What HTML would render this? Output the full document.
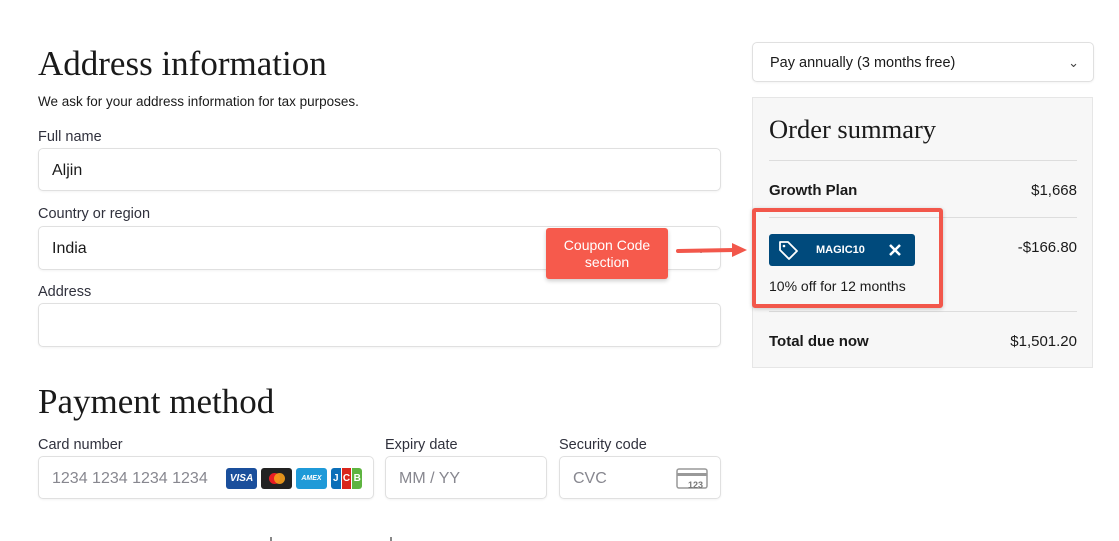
<!DOCTYPE html><html><head><style>
body{margin:0;width:1119px;height:541px;background:#fff;font-family:"Liberation Sans",sans-serif;color:#1a1a1a;position:relative;overflow:hidden}
.a{position:absolute}
.h{font-family:"Liberation Serif",serif;font-size:35px;color:#1a1a1a}
.lbl{font-size:14.5px;color:#30313d}
.in{position:absolute;border:1px solid #e0e0e0;border-radius:5px;box-shadow:0 1px 2px rgba(0,0,0,.05);box-sizing:border-box;font-size:16px;padding-left:13px;padding-top:2px;display:flex;align-items:center;background:#fff}
.ph{color:#87878f}
</style></head><body>
<div class="a h" style="left:38px;top:44px">Address information</div>
<div class="a" style="left:38px;top:94px;font-size:13.5px">We ask for your address information for tax purposes.</div>
<div class="a lbl" style="left:38px;top:129px">Full name</div>
<div class="in" style="left:38px;top:148px;width:683px;height:43px">Aljin</div>
<div class="a lbl" style="left:38px;top:206px">Country or region</div>
<div class="in" style="left:38px;top:226px;width:683px;height:44px">India<span style="position:absolute;right:14px;font-size:12px;color:#555">⌄</span></div>
<div class="a lbl" style="left:38px;top:284px">Address</div>
<div class="in" style="left:38px;top:303px;width:683px;height:44px"></div>
<div class="a h" style="left:38px;top:382px">Payment method</div>
<div class="a lbl" style="left:38px;top:437px">Card number</div>
<div class="a lbl" style="left:385px;top:437px">Expiry date</div>
<div class="a lbl" style="left:559px;top:437px">Security code</div>
<div class="in ph" style="left:38px;top:456px;width:336px;height:43px">1234 1234 1234 1234
<div class="a" style="left:187px;top:11px;display:flex;gap:4px">
<div style="width:31px;height:21px;background:#1a4f9c;border-radius:3px;color:#fff;font:italic bold 10px 'Liberation Sans';display:flex;align-items:center;justify-content:center">VISA</div>
<div style="width:31px;height:21px;background:#222;border-radius:3px;position:relative"><span style="position:absolute;left:8px;top:5px;width:11px;height:11px;border-radius:50%;background:#e91c24"></span><span style="position:absolute;left:13px;top:5px;width:11px;height:11px;border-radius:50%;background:#f79e1b;opacity:.9"></span></div>
<div style="width:31px;height:21px;background:#1f9ad8;border-radius:3px;color:#fff;font:italic bold 7px 'Liberation Sans';display:flex;align-items:center;justify-content:center">AMEX</div>
<div style="width:31px;height:21px;display:flex;gap:1px;font:bold 10px 'Liberation Sans';color:#fff"><span style="flex:1;background:#0b6fb8;border-radius:3px 0 0 3px;text-align:center;line-height:21px">J</span><span style="flex:1;background:#d9261c;text-align:center;line-height:21px">C</span><span style="flex:1;background:#5eb440;border-radius:0 3px 3px 0;text-align:center;line-height:21px">B</span></div>
</div></div>
<div class="in ph" style="left:385px;top:456px;width:162px;height:43px">MM / YY</div>
<div class="in ph" style="left:559px;top:456px;width:162px;height:43px">CVC
<svg class="a" style="left:116px;top:11px" width="32" height="22" viewBox="0 0 32 22"><rect x="1" y="1" width="30" height="19" rx="2" fill="none" stroke="#999" stroke-width="1.5"/><rect x="1" y="5" width="30" height="3" fill="#999"/><text x="12" y="20" font-size="9" font-family="Liberation Sans" fill="#777" font-weight="bold">123</text></svg></div>
<div class="in" style="left:752px;top:42px;width:342px;height:40px;font-size:14.5px;padding-left:17px">Pay annually (3 months free)<span style="position:absolute;right:14px;font-size:13px;color:#444">⌄</span></div>
<div class="a" style="left:752px;top:97px;width:341px;height:271px;background:#f7f7f7;border:1px solid #e6e6e6;box-sizing:border-box"></div>
<div class="a" style="left:769px;top:114px;font-family:'Liberation Serif',serif;font-size:26.5px">Order summary</div>
<div class="a" style="left:769px;top:160px;width:308px;height:1px;background:#ddd"></div>
<div class="a" style="left:769px;top:182px;font-size:15px;font-weight:bold">Growth Plan</div>
<div class="a" style="right:42px;top:182px;font-size:15px">$1,668</div>
<div class="a" style="left:769px;top:217px;width:308px;height:1px;background:#ddd"></div>
<div class="a" style="right:42px;top:239px;font-size:15px">-$166.80</div>
<div class="a" style="left:769px;top:311px;width:308px;height:1px;background:#ddd"></div>
<div class="a" style="left:769px;top:333px;font-size:15px;font-weight:bold">Total due now</div>
<div class="a" style="right:42px;top:333px;font-size:15px">$1,501.20</div>
<div class="a" style="left:752px;top:208px;width:191px;height:100px;border:4px solid #f2574b;border-radius:3px;box-sizing:border-box;box-shadow:0 1px 4px rgba(0,0,0,.2)"></div>
<div class="a" style="left:769px;top:234px;width:146px;height:32px;background:#004a7c;border-radius:3px;color:#fff">
<svg class="a" style="left:9px;top:6px" width="21" height="20" viewBox="0 0 21 20"><path d="M2 2h8l9 9-8 8-9-9z" fill="none" stroke="#fff" stroke-width="1.8" stroke-linejoin="round"/><circle cx="6" cy="6" r="1.3" fill="#fff"/></svg>
<span class="a" style="left:47px;top:10px;font-size:11px;font-weight:bold">MAGIC10</span>
<svg class="a" style="left:119px;top:9px" width="14" height="14"><path d="M2 2l10 10M12 2L2 12" stroke="#fff" stroke-width="2.5"/></svg></div>
<div class="a" style="left:769px;top:278px;font-size:14px">10% off for 12 months</div>
<div class="a" style="left:546px;top:228px;width:122px;height:51px;background:#f65a4c;border-radius:3px;color:#fff;font-size:14px;text-align:center;line-height:17px;padding-top:9px;box-sizing:border-box;box-shadow:0 2px 4px rgba(0,0,0,.2)">Coupon Code<br>section</div>
<svg class="a" style="left:674px;top:240px" width="74" height="20"><path d="M4 11L60 10" stroke="#f2574b" stroke-width="4" stroke-linecap="round"/><path d="M58 3L73 10L58 17z" fill="#f2574b"/></svg>
<div class="a" style="left:270px;top:537px;width:2px;height:4px;background:#888"></div>
<div class="a" style="left:390px;top:537px;width:2px;height:4px;background:#888"></div>
</body></html>
